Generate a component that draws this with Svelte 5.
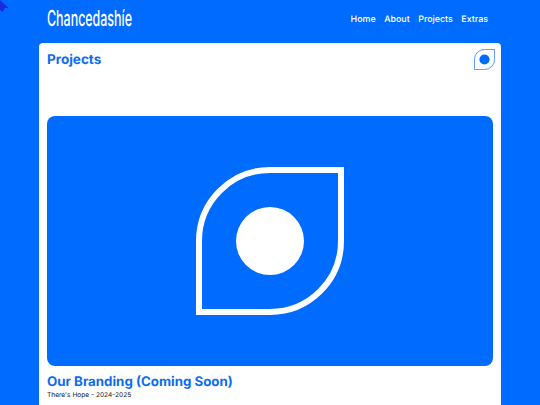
<script lang="ts">
  const LINKS = ["Home", "About", "Projects", "Extras"];
</script>

<svg class="cursor" width="10" height="13" viewBox="0 0 10 13" aria-hidden="true">
  <path d="M0 0 L8.5 8 L5 8 L2.5 12 L0 10 Z" fill="#1a2be0" />
</svg>

<div class="page">
  <header class="topbar">
    <span class="brand"><span class="brand-text">Chancedashíe</span></span>
    <nav class="links">
      {#each LINKS as link (link)}
        <a href="#top">{link}</a>
      {/each}
    </nav>
  </header>

  <main class="card">
    <div class="card-head">
      <h1>Projects</h1>
      <svg class="mark" viewBox="0 0 148 148" aria-hidden="true">
        <path d="M145 3 V74 A71 71 0 0 1 74 145 H3 V74 A71 71 0 0 1 74 3 Z" fill="none" stroke="#0b6cf0" stroke-width="7" opacity="0.7" />
        <circle cx="74" cy="74" r="36" fill="#006bff" />
      </svg>
    </div>

    <article class="project">
      <div class="cover">
        <svg viewBox="0 0 148 148" width="148" height="148" aria-hidden="true">
          <path d="M145 3 V74 A71 71 0 0 1 74 145 H3 V74 A71 71 0 0 1 74 3 Z" fill="none" stroke="#fff" stroke-width="6" />
          <circle cx="74" cy="74" r="34" fill="#fff" />
        </svg>
      </div>
      <h2>Our Branding (Coming Soon)</h2>
      <p>There's Hope - 2024-2025</p>
    </article>
  </main>
</div>

<style>
  :global(body) {
    margin: 0;
    background: #006bff;
    overflow: hidden;
  }

  .page {
    height: 405px;
    overflow: hidden;
    font-family: Inter, "Liberation Sans", sans-serif;
    text-rendering: geometricPrecision;
  }

  .cursor {
    position: absolute;
    top: 0;
    left: 0;
  }

  .topbar {
    height: 43px;
    box-sizing: border-box;
    padding: 0 52px 5px 47px;
    display: flex;
    align-items: center;
    justify-content: space-between;
  }

  .brand {
    display: block;
    width: 86px;
    color: #fff;
  }

  .brand-text {
    display: inline-block;
    font-size: 22px;
    font-weight: 500;
    transform: scaleX(0.565);
    transform-origin: left center;
    white-space: nowrap;
  }

  .links {
    display: flex;
    gap: 8.5px;
  }

  .links a {
    color: #fff;
    font-size: 8.9px;
    font-weight: 500;
    text-decoration: none;
  }

  .card {
    margin: 0 39px;
    padding: 8px;
    height: 400px;
    background: #fff;
    border-radius: 4px;
  }

  .card-head {
    height: 65px;
    display: flex;
    align-items: flex-start;
    justify-content: space-between;
  }

  h1 {
    margin: 1px 0 0;
    font-size: 13.5px;
    line-height: 17px;
    font-weight: 700;
    color: #0b6cf0;
  }

  .mark {
    width: 21px;
    height: 21px;
    margin-right: -2px;
    margin-top: -2px;
  }

  .cover {
    height: 250px;
    border-radius: 8px;
    background: #006bff;
    display: flex;
    align-items: center;
    justify-content: center;
  }

  h2 {
    margin: 8px 0 0;
    font-size: 13.3px;
    line-height: 17px;
    font-weight: 700;
    color: #0b6cf0;
  }

  p {
    margin: 0;
    font-size: 6.6px;
    line-height: 8px;
    color: #222;
  }
</style>
